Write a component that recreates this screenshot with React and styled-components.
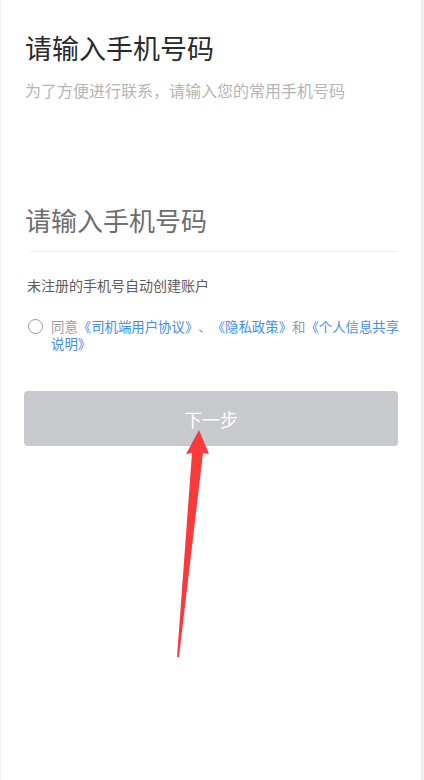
import styled, { createGlobalStyle } from 'styled-components'

const GlobalStyle = createGlobalStyle`
  html, body {
    margin: 0;
    padding: 0;
    background: #efefef;
  }
  * {
    box-sizing: border-box;
  }
`

const Page = styled.div`
  position: relative;
  width: 420px;
  min-height: 780px;
  margin-left: 1px;
  background: #fff;
  padding: 30px 24px 0 24px;
  font-family: "Noto Sans CJK SC", "Noto Sans", sans-serif;
  text-spacing-trim: space-all;
`

const Title = styled.h1`
  margin: 0;
  font-size: 27px;
  line-height: 36px;
  font-weight: 400;
  color: #2a2a2a;
`

const Subtitle = styled.p`
  margin: 13px 0 0;
  font-size: 16px;
  line-height: 22px;
  color: #b5b5b5;
`

const InputRow = styled.div`
  margin-top: 96px;
  padding-bottom: 10px;
`

const PhoneInput = styled.input`
  display: block;
  width: 100%;
  height: 44px;
  border: 0;
  outline: none;
  padding: 0;
  background: transparent;
  font-family: inherit;
  font-size: 26px;
  color: #333;
  &::placeholder {
    color: #6e6e6e;
  }
`

const Divider = styled.div`
  height: 1px;
  margin-left: 5px;
  background: #eeeeee;
`

const Note = styled.p`
  margin: 23px 0 0 2px;
  font-size: 14px;
  line-height: 20px;
  color: #5c5c5c;
`

const Agreement = styled.div`
  display: flex;
  align-items: flex-start;
  gap: 8px;
  margin: 23px -8px 0 3px;
`

const Radio = styled.span`
  flex: none;
  width: 15px;
  height: 15px;
  margin-top: 1px;
  border: 1.5px solid #9a9a9a;
  border-radius: 50%;
`

const AgreeText = styled.p`
  flex: 1;
  margin: 0;
  font-size: 13.4px;
  line-height: 16.5px;
  color: #9c9c9c;
`

const Link = styled.span`
  color: #3f8ef0;
`

const NextButton = styled.button`
  display: block;
  width: 374px;
  height: 55px;
  margin: 40px 0 0 -1px;
  border: 0;
  border-radius: 4px;
  background: #c8c9cc;
  color: #fff;
  font-family: inherit;
  font-size: 18px;
`

const Arrow = styled.svg`
  position: absolute;
  left: -1px;
  top: 0;
  pointer-events: none;
`

export default function App() {
  return (
    <>
      <GlobalStyle />
      <Page>
        <Title>请输入手机号码</Title>
        <Subtitle>为了方便进行联系，请输入您的常用手机号码</Subtitle>
        <InputRow>
          <PhoneInput type="tel" placeholder="请输入手机号码" />
        </InputRow>
        <Divider />
        <Note>未注册的手机号自动创建账户</Note>
        <Agreement>
          <Radio />
          <AgreeText>
            同意<Link>《司机端用户协议》</Link>、<Link>《隐私政策》</Link>和<Link>《个人信息共享</Link>
            <br />
            <Link>说明》</Link>
          </AgreeText>
        </Agreement>
        <NextButton>下一步</NextButton>
        <Arrow width="424" height="780" viewBox="0 0 424 780">
          <polygon
            points="199,430 209,454 203,453 179,657 177,657 192,453 186,454"
            fill="#f93a3a"
          />
        </Arrow>
      </Page>
    </>
  )
}
